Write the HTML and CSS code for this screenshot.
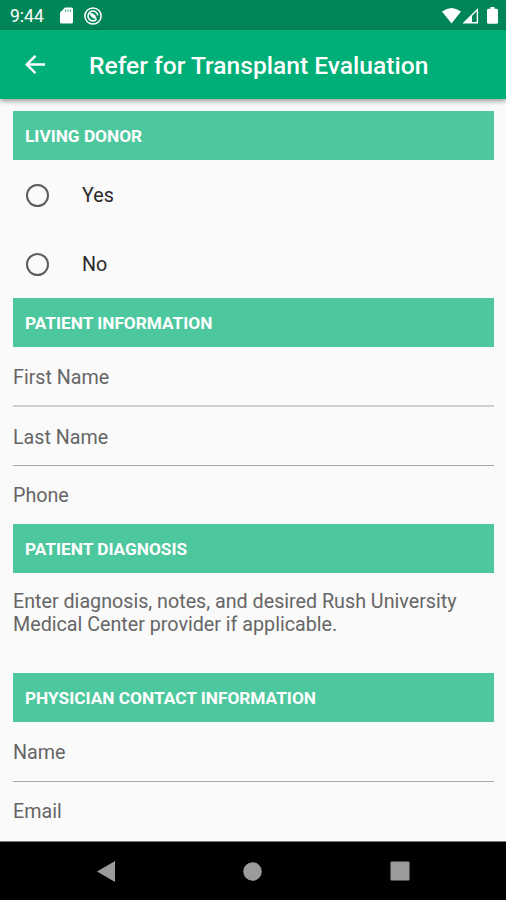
FILE: index.html
```html
<!DOCTYPE html>
<html lang="en">
<head>
    <meta charset="UTF-8">
    <meta name="viewport" content="width=device-width, initial-scale=1.0">
    <title>Refer for Transplant Evaluation</title>
    <link rel="stylesheet" href="styles.css">
</head>
<body>

<!-- Status bar -->
<div class="status-bar">
    <span class="time">9:44</span>
    <svg class="icon-sd" width="13" height="17" viewBox="0 0 13 17"><path d="M5 0.5H11.5Q13 0.5 13 2V15Q13 16.5 11.5 16.5H1.5Q0 16.5 0 15V5.5Z" fill="#fff"/><path d="M5.5 2.5V4.8M8 2.5V4.8M10.5 2.5V4.8" stroke="#008557" stroke-width="0.8"/></svg>
    <svg class="icon-app" width="18" height="18" viewBox="0 0 18 18" fill="none" stroke="#fff">
        <circle cx="9" cy="9" r="8.1" stroke-width="1.5"/>
        <path d="M12.6 12.2A4.9 4.9 0 1 1 13.8 8.5" stroke-width="1.6"/>
        <path d="M5.8 6.6Q10.5 5.6 12.2 11.4Q7.5 11.5 5.8 6.6Z" fill="#fff" stroke-width="0.8"/>
    </svg>
    <div class="status-right">
        <svg width="19" height="16" viewBox="0 0 19 16"><path d="M0 3.5Q9.5 -3.5 19 3.5L9.5 15.5Z" fill="#fff"/></svg>
        <svg class="icon-signal" width="17" height="16" viewBox="0 0 17 16"><path d="M2.2 14.8L15.4 1.6V14.8Z" fill="none" stroke="#fff" stroke-width="1.4"/><path d="M2 15L10 7V15Z" fill="#fff"/></svg>
        <svg class="icon-battery" width="11" height="17" viewBox="0 0 11 17"><path d="M3.5 0H7.5V1.8H9.5Q11 1.8 11 3.3V15.2Q11 16.7 9.5 16.7H1.5Q0 16.7 0 15.2V3.3Q0 1.8 1.5 1.8H3.5Z" fill="#fff"/></svg>
    </div>
</div>

<header>
    <svg class="back" width="20" height="20" viewBox="0 0 20 20"><path d="M20 9.5H1.8M10.5 0.8L1.8 9.5L10.5 18.2" fill="none" stroke="#fff" stroke-width="2.4"/></svg>
    <h1>Refer for Transplant Evaluation</h1>
</header>

<main>
    <h2>LIVING DONOR</h2>
    <div class="option"><span class="radio"></span>Yes</div>
    <div class="option"><span class="radio"></span>No</div>

    <h2>PATIENT INFORMATION</h2>
    <div class="field thick">First Name</div>
    <div class="field">Last Name</div>
    <div class="field last">Phone</div>

    <h2>PATIENT DIAGNOSIS</h2>
    <div class="notes">Enter diagnosis, notes, and desired Rush University Medical Center provider if applicable.</div>

    <h2>PHYSICIAN CONTACT INFORMATION</h2>
    <div class="field">Name</div>
    <div class="field last">Email</div>
</main>

<!-- Android navigation -->
<nav>
    <svg width="18" height="21" viewBox="0 0 18 21"><path d="M18 0V21L0 10.5Z" fill="#9b9b9b"/></svg>
    <svg width="19" height="19" viewBox="0 0 19 19"><circle cx="9.5" cy="9.5" r="9.3" fill="#9b9b9b"/></svg>
    <svg width="20" height="20" viewBox="0 0 20 20"><rect x="0.5" y="0.5" width="19" height="19" rx="1.2" fill="#9b9b9b"/></svg>
</nav>

</body>
</html>
```

FILE: styles.css
```css
* {
    box-sizing: border-box;
}
body {
    margin: 0;
    height: 900px;
    display: flex;
    flex-direction: column;
    overflow: hidden;
    font-family: Roboto, sans-serif;
    background-color: #fafafa;
}
svg {
    display: block;
    flex: none;
}
.status-bar {
    height: 30px;
    flex: none;
    display: flex;
    align-items: center;
    padding: 1px 8px 0 10px;
    background-color: #008557;
    color: #fff;
}
.time {
    width: 50px;
    font-size: 17.5px;
}
.icon-app {
    margin-left: 11px;
}
.status-right {
    display: flex;
    align-items: center;
    margin-left: auto;
}
.icon-signal {
    margin-left: 1px;
}
.icon-battery {
    margin-left: 8px;
}
header {
    height: 69px;
    flex: none;
    display: flex;
    align-items: center;
    padding-left: 25px;
    background-color: #00af77;
    color: #fff;
    box-shadow: 0 2px 5px rgba(0, 0, 0, 0.4);
}
h1 {
    margin: 1px 0 0 44px;
    font-size: 24.6px;
    font-weight: 500;
    white-space: nowrap;
}
main {
    flex: 1;
    padding: 12px 12px 0 13px;
    overflow: hidden;
}
h2 {
    height: 49px;
    margin: 0;
    padding-left: 12px;
    line-height: 51px;
    font-size: 17.25px;
    font-weight: 700;
    color: #fff;
    background-color: #4dc79e;
}
.option {
    height: 69px;
    display: flex;
    align-items: center;
    padding: 1px 0 0 13px;
    font-size: 19.7px;
    color: #2a2a2a;
}
.radio {
    width: 23px;
    height: 23px;
    margin-right: 33px;
    border: 2px solid #5c5c5c;
    border-radius: 50%;
}
.field {
    height: 59px;
    line-height: 61px;
    font-size: 19.7px;
    color: #666;
    border-bottom: 1px solid #a8a8a8;
}
.field.thick {
    height: 60px;
    border-bottom: 2px solid #cfcfcf;
}
.field.last {
    height: 58px;
    line-height: 60px;
    border-bottom: none;
}
h2 + .field:not(.thick) {
    height: 60px;
}
.notes {
    height: 100px;
    padding-top: 17px;
    line-height: 23px;
    font-size: 19.7px;
    color: #666;
}
nav {
    height: 59px;
    flex: none;
    display: flex;
    align-items: center;
    justify-content: space-between;
    padding: 0 96px 0 97px;
    background-color: #000;
    border-top: 1px solid #777;
}
```
